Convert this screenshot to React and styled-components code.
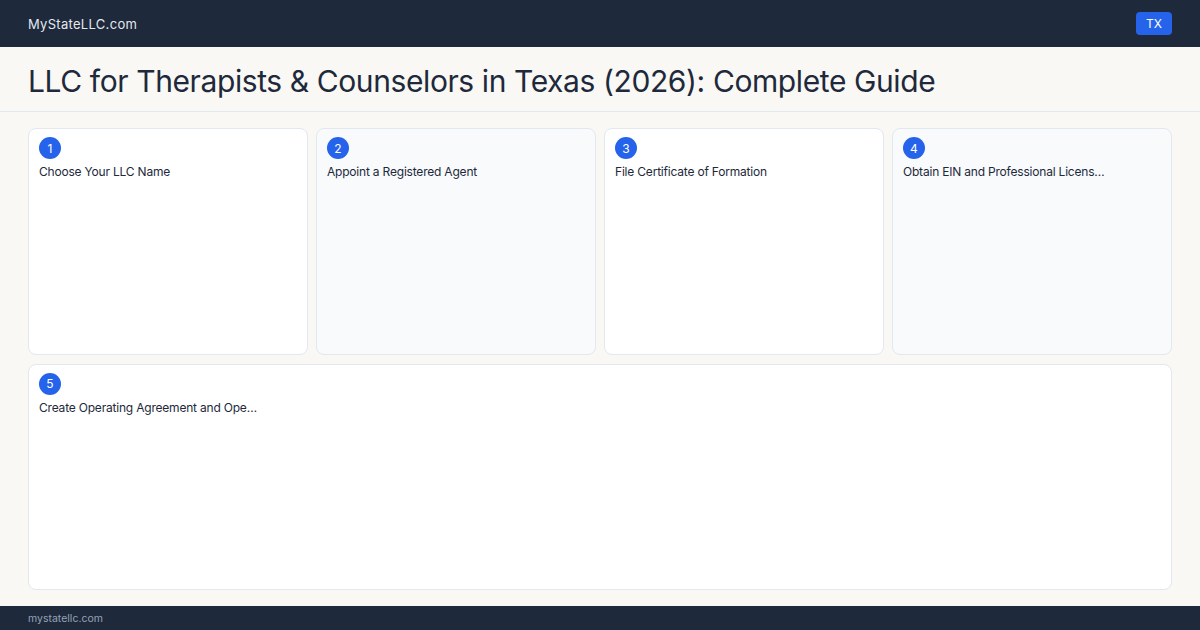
import styled, { createGlobalStyle } from "styled-components";

const GlobalStyle = createGlobalStyle`
  html, body {
    margin: 0;
    padding: 0;
    height: 100%;
  }
  body {
    font-family: Inter, "Noto Sans", sans-serif;
    background: #f9f8f5;
    color: #1e293b;
  }
  #root {
    height: 100%;
  }
`;

const Page = styled.div`
  display: flex;
  flex-direction: column;
  height: 100vh;
`;

const TopBar = styled.header`
  display: flex;
  align-items: center;
  justify-content: space-between;
  height: 47px;
  padding: 0 28px;
  background: #1e293b;
  box-sizing: border-box;
  flex-shrink: 0;
`;

const Brand = styled.span`
  font-size: 13px;
  color: #e2e8f0;
  letter-spacing: 0.3px;
`;

const StateTag = styled.span`
  display: inline-flex;
  align-items: center;
  justify-content: center;
  height: 23px;
  width: 36px;
  border-radius: 4px;
  background: #2563eb;
  color: #ffffff;
  font-size: 12px;
`;

const TitleBar = styled.div`
  padding: 18px 28px 14px;
  border-bottom: 1px solid #e2e8f0;
  flex-shrink: 0;
`;

const Title = styled.h1`
  margin: 0;
  font-size: 30px;
  line-height: 32px;
  font-weight: 400;
  letter-spacing: -0.4px;
  color: #1e293b;
`;

const StepGrid = styled.main`
  flex: 1;
  display: grid;
  grid-template-columns: repeat(4, 1fr);
  grid-template-rows: 1fr 1fr;
  gap: 9px 8px;
  padding: 16px 28px 16px;
  min-height: 0;
`;

const StepCard = styled.div`
  grid-column: ${(props) => (props.$wide ? "1 / -1" : "auto")};
  background: ${(props) => (props.$muted ? "#f8fafc" : "#ffffff")};
  border: 1px solid #e2e8f0;
  border-radius: 8px;
  padding: 8px 10px;
  display: flex;
  flex-direction: column;
  align-items: flex-start;
  gap: 5px;
  min-width: 0;
`;

const StepNumber = styled.span`
  display: inline-flex;
  align-items: center;
  justify-content: center;
  width: 22px;
  height: 22px;
  border-radius: 50%;
  background: #2563eb;
  color: #ffffff;
  font-size: 12px;
`;

const StepLabel = styled.p`
  margin: 0;
  font-size: 12px;
  line-height: 16px;
  letter-spacing: -0.2px;
  color: #1e293b;
`;

const BottomBar = styled.footer`
  height: 24px;
  display: flex;
  align-items: center;
  padding: 0 28px;
  background: #1e293b;
  flex-shrink: 0;
`;

const FooterText = styled.span`
  font-size: 10.5px;
  color: #94a3b8;
`;

const steps = [
  "Choose Your LLC Name",
  "Appoint a Registered Agent",
  "File Certificate of Formation",
  "Obtain EIN and Professional Licens…",
  "Create Operating Agreement and Ope…",
];

function App() {
  return (
    <>
      <GlobalStyle />
      <Page>
        <TopBar>
          <Brand>MyStateLLC.com</Brand>
          <StateTag>TX</StateTag>
        </TopBar>
        <TitleBar>
          <Title>
            LLC for Therapists &amp; Counselors in Texas (2026): Complete Guide
          </Title>
        </TitleBar>
        <StepGrid>
          {steps.map((label, i) => (
            <StepCard key={label} $muted={i % 2 === 1} $wide={i === 4}>
              <StepNumber>{i + 1}</StepNumber>
              <StepLabel>{label}</StepLabel>
            </StepCard>
          ))}
        </StepGrid>
        <BottomBar>
          <FooterText>mystatellc.com</FooterText>
        </BottomBar>
      </Page>
    </>
  );
}

export default App;
